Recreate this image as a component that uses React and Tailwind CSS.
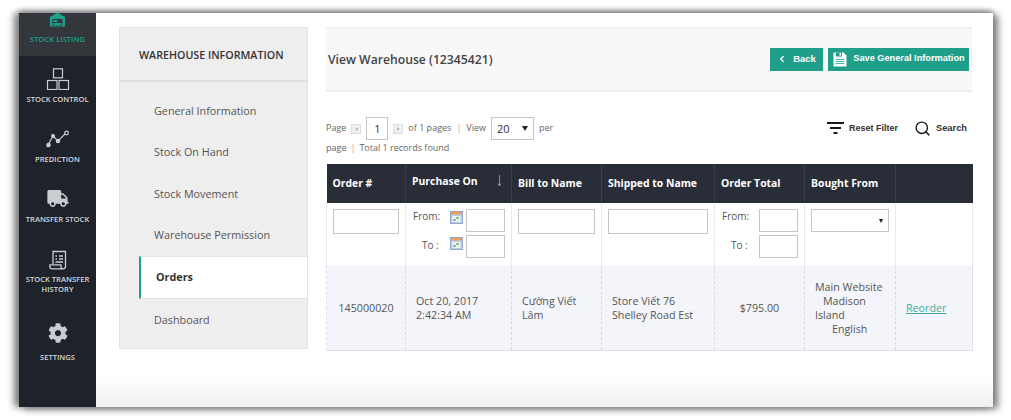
import { ChevronLeft, Search } from 'lucide-react';
import { FaCog, FaTruck } from 'react-icons/fa';

const tabs = ['General Information', 'Stock On Hand', 'Stock Movement', 'Warehouse Permission'];

function WarehouseIcon() {
  return (
    <svg width="17" height="15" viewBox="0 0 17 15" fill="#1f9f8a">
      <path d="M1 5 L8.5 0.5 L16 5 V14.5 H1 Z" />
      <rect x="3.5" y="7" width="10" height="6.5" fill="#33373c" />
      <rect x="4.5" y="8" width="4" height="2" fill="#1f9f8a" />
      <rect x="4.5" y="11" width="8" height="2" fill="#1f9f8a" />
    </svg>
  );
}

function BoxesIcon() {
  return (
    <svg width="24" height="22" viewBox="0 0 24 22" fill="none" stroke="#c9ccd0" strokeWidth="1.2">
      <rect x="7.5" y="0.8" width="9" height="9" />
      <rect x="1.5" y="12.5" width="9.5" height="9" />
      <rect x="13" y="12.5" width="9.5" height="9" />
    </svg>
  );
}

function PredictionIcon() {
  return (
    <svg width="24" height="18" viewBox="0 0 24 18" fill="#c9ccd0" stroke="#c9ccd0" strokeWidth="1.2">
      <path d="M2 15 L7 6 L12 11 L20 3" fill="none" />
      <circle cx="2.5" cy="15" r="1.7" />
      <circle cx="7" cy="6" r="1.4" />
      <circle cx="12" cy="11" r="1.7" />
      <circle cx="20.5" cy="3" r="1.8" fill="#1e232b" />
    </svg>
  );
}

function HistoryIcon() {
  return (
    <svg width="18" height="20" viewBox="0 0 18 20" fill="none" stroke="#c9ccd0" strokeWidth="1.3">
      <path d="M4 14 V1.5 H16.5 V16.5 C16.5 18 15.5 18.8 14 18.8 H3 C1.5 18.8 0.8 17.8 0.8 16.2 V14.8 H12 V16.5 C12 18 13 18.8 14 18.8" />
      <path d="M6.5 6 H8 M10 6 H14 M6.5 9 H8 M10 9 H14 M6.5 12 H14" />
    </svg>
  );
}

function FloppyIcon() {
  return (
    <svg width="14" height="15" viewBox="0 0 14 15" fill="#ffffff" className="shrink-0">
      <path d="M0.5 0.5 H10.5 L13.5 3.5 V14.5 H0.5 Z" />
      <rect x="3" y="0.5" width="6" height="4" fill="#1f9f8a" />
      <rect x="6.5" y="1.2" width="1.5" height="2.5" fill="#ffffff" />
      <path d="M2.5 7.5 H11.5 M2.5 9.5 H11.5 M2.5 11.5 H11.5" stroke="#1f9f8a" strokeWidth="0.8" />
    </svg>
  );
}

function FilterIcon() {
  return (
    <svg width="17" height="13" viewBox="0 0 17 13" fill="#1a1a1a">
      <rect x="0" y="0" width="17" height="2" />
      <rect x="3" y="5" width="11" height="2" />
      <rect x="6.5" y="10" width="4" height="2" />
    </svg>
  );
}

function CalendarIcon() {
  return (
    <svg width="13" height="13" viewBox="0 0 13 13" className="shrink-0">
      <rect x="0.5" y="0.5" width="12" height="12" fill="#b9cdea" stroke="#8fa9cf" />
      <rect x="1" y="1" width="11" height="2.5" fill="#f0a05a" />
      <rect x="2.5" y="5" width="8" height="6" fill="#eef3f5" />
      <rect x="6.5" y="6" width="2" height="2" fill="#62a84f" />
      <rect x="3.5" y="8" width="2" height="2" fill="#62a84f" />
    </svg>
  );
}

function SortArrow() {
  return (
    <svg width="5" height="12" viewBox="0 0 5 12" fill="none" stroke="#8a8d94" strokeWidth="1" className="mr-[3px] mt-[1px]">
      <path d="M2.5 0 V11 M0.8 8.5 L2.5 11 L4.2 8.5" />
    </svg>
  );
}

function PagerArrow({ dir }) {
  return (
    <span className="mx-[5px] inline-flex h-[10px] w-[10px] items-center justify-center border border-[#dddddd] bg-[#f0f0f0] align-middle">
      <span className={dir === 'left' ? 'h-0 w-0 border-y-[2px] border-r-[3px] border-y-transparent border-r-[#bbbbbb]' : 'h-0 w-0 border-y-[2px] border-l-[3px] border-y-transparent border-l-[#bbbbbb]'} />
    </span>
  );
}

function NavItem({ icon, label, className }) {
  return (
    <div className={`flex flex-col items-center text-center text-[7.6px] leading-[10px] text-[#d5d7da] ${className}`}>
      {icon}
      {label}
    </div>
  );
}

function Th({ children }) {
  return <th className="border-r border-[#3a3f4b] px-[6px] text-left text-[10.4px] font-bold text-white">{children}</th>;
}

function FilterRow({ label, calendar }) {
  return (
    <div className="flex h-[26px] items-start">
      <span className={`w-[37px] shrink-0 text-[10px] leading-[15px] text-[#555555] ${label === 'To :' ? 'pl-[9px] pt-[3px]' : ''}`}>{label}</span>
      {calendar && <span className="mr-[3px] mt-[2px] flex w-[13px] shrink-0"><CalendarIcon /></span>}
      <span className="h-[23px] w-[39px] shrink-0 border border-[#c6c6c6] bg-white" />
    </div>
  );
}

export default function App() {
  return (
    <div className="h-[420px] w-[1011px] overflow-hidden bg-white pl-[19px] pt-[13px]" style={{ fontFamily: '"Open Sans", sans-serif' }}>
      <div className="flex h-[394px] w-[974px] overflow-hidden bg-gradient-to-b from-white from-[93%] to-[#efefef] shadow-[-5px_0px_7px_#808080,5px_2px_7px_#808080,0px_-2px_5px_#999999]">
        <aside className="flex h-full w-[77px] shrink-0 flex-col bg-[#1e232b] font-semibold">
          <div className="flex h-[43px] flex-col items-center bg-[#33373c] text-[7.6px] leading-[10px] text-[#1f9f8a]">
            <span className="mt-[-1px] flex h-[15px] items-end overflow-hidden"><WarehouseIcon /></span>
            <span className="mt-[7px]">STOCK LISTING</span>
          </div>
          <NavItem className="h-[60px] pt-[12px]" icon={<span className="mb-[4px]"><BoxesIcon /></span>} label="STOCK CONTROL" />
          <NavItem className="h-[60px] pt-[14px]" icon={<span className="mb-[6px]"><PredictionIcon /></span>} label="PREDICTION" />
          <NavItem className="h-[60px] pt-[14px]" icon={<FaTruck className="mb-[7px] h-[17px] w-[22px] text-[#c9ccd0]" />} label="TRANSFER STOCK" />
          <NavItem className="h-[70px] pt-[14px]" icon={<span className="mb-[4px]"><HistoryIcon /></span>} label={<span>STOCK TRANSFER<br />HISTORY</span>} />
          <NavItem className="pt-[17px]" icon={<FaCog className="mb-[9px] h-[20px] w-[20px] text-[#c9ccd0]" />} label="SETTINGS" />
        </aside>

        <div className="ml-[23px] mt-[14px] flex h-[322px] w-[189px] shrink-0 flex-col border border-[#e2e2e8] bg-[#eeeeee]">
          <div className="flex h-[54px] shrink-0 items-center border-b-2 border-[#dfdfe3] pl-[19px] pt-[3px] text-[10.7px] font-semibold text-[#333333]">WAREHOUSE INFORMATION</div>
          <div className="ml-[19px] flex flex-1 flex-col">
            <div className="pt-[8px]">
              {tabs.map((tab) => (
                <div key={tab} className="flex h-[41.5px] items-center pl-[15px] text-[10.8px] text-[#555555]">{tab}</div>
              ))}
            </div>
            <div className="flex h-[43px] shrink-0 items-center border-y border-[#e2e2e8] border-l-2 border-l-[#1f9f8a] bg-white pl-[15px] text-[10.8px] font-bold text-[#333333]">Orders</div>
            <div className="flex h-[42px] items-center pl-[15px] text-[10.8px] text-[#555555]">Dashboard</div>
          </div>
        </div>

        <main className="ml-[18px] mt-[14px] w-[646px] shrink-0">
          <header className="flex h-[65px] items-center justify-between border-y-2 border-[#eeeeee] bg-[#f8f8f8] pl-[2px] pr-[3px]">
            <h1 className="pt-[1px] text-[12.2px] font-semibold text-[#444444]">View Warehouse (12345421)</h1>
            <div className="mb-[1px] flex gap-[5px]" style={{ fontFamily: '"Liberation Sans", sans-serif' }}>
              <button type="button" className="flex h-[23px] w-[53px] items-center justify-center gap-[6px] bg-[#1f9f8a] text-[9.5px] font-bold text-white">
                <ChevronLeft className="h-[10px] w-[10px]" strokeWidth={3} />
                Back
              </button>
              <button type="button" className="flex h-[23px] w-[141px] items-center justify-center gap-[6px] whitespace-nowrap bg-[#1f9f8a] pl-[1px] text-[9.2px] font-bold text-white">
                <FloppyIcon />
                Save General Information
              </button>
            </div>
          </header>

          <div className="flex h-[72px] items-start justify-between">
            <div className="mt-[25px] w-[240px] text-[9px] leading-[19px] text-[#666666]">
              Page<PagerArrow dir="left" />
              <span className="inline-flex h-[23px] w-[22px] items-center justify-center border border-[#c6c6c6] bg-white align-middle text-[11px] text-[#333333]">1</span>
              <PagerArrow dir="right" />of 1 pages<span className="mx-[5px] text-[#aaaaaa]">|</span>View
              <span className="mx-[5px] inline-flex h-[23px] w-[43px] items-center justify-between border border-[#c6c6c6] bg-white px-[5px] align-middle text-[11px] text-[#333333]">
                20<span className="h-0 w-0 border-x-[3px] border-t-[5px] border-x-transparent border-t-[#222222]" />
              </span>
              per
              <div className="mt-[-2px]">page<span className="mx-[4px] text-[#aaaaaa]">|</span>Total 1 records found</div>
            </div>
            <div className="mr-[5px] mt-[28px] flex items-center text-[9px] font-bold text-[#333333]" style={{ fontFamily: '"Liberation Sans", sans-serif' }}>
              <FilterIcon />
              <span className="ml-[5px]">Reset Filter</span>
              <Search className="ml-[16px] h-[17px] w-[17px] text-[#1a1a1a]" strokeWidth={2} />
              <span className="ml-[5px] text-[9.3px]">Search</span>
            </div>
          </div>

          <table className="w-[646px] table-fixed border-collapse">
            <colgroup>
              <col className="w-[79px]" />
              <col className="w-[106px]" />
              <col className="w-[90px]" />
              <col className="w-[113px]" />
              <col className="w-[90px]" />
              <col className="w-[91px]" />
              <col className="w-[77px]" />
            </colgroup>
            <thead>
              <tr className="h-[39px] bg-[#292d38]">
                <Th>Order #</Th>
                <Th>
                  <span className="flex items-start justify-between pb-[4px]">
                    Purchase On
                    <SortArrow />
                  </span>
                </Th>
                <Th>Bill to Name</Th>
                <Th>Shipped to Name</Th>
                <Th>Order Total</Th>
                <Th>Bought From</Th>
                <th />
              </tr>
            </thead>
            <tbody>
              <tr className="h-[63px] align-top">
                <td className="border-x border-[#e9e9ee] px-[6px] pt-[6px]"><div className="h-[25px] border border-[#c6c6c6]" /></td>
                <td className="border-r border-[#e9e9ee] pl-[7px] pt-[6px]"><FilterRow label="From:" calendar /><FilterRow label="To :" calendar /></td>
                <td className="border-r border-[#e9e9ee] px-[6px] pt-[6px]"><div className="h-[25px] border border-[#c6c6c6]" /></td>
                <td className="border-r border-[#e9e9ee] px-[6px] pt-[6px]"><div className="h-[25px] border border-[#c6c6c6]" /></td>
                <td className="border-r border-[#e9e9ee] pl-[7px] pt-[6px]"><FilterRow label="From:" /><FilterRow label="To :" /></td>
                <td className="border-r border-[#e9e9ee] px-[6px] pt-[6px]">
                  <div className="flex h-[23px] items-center justify-end border border-[#c6c6c6] pr-[5px]">
                    <span className="h-0 w-0 border-x-[2.5px] border-t-[4px] border-x-transparent border-t-[#222222]" />
                  </div>
                </td>
                <td className="border-r border-[#e9e9ee]" />
              </tr>
              <tr className="h-[84px] border-b border-[#dfdfe6] bg-[#f4f5fb] text-[10.7px] leading-[14px] text-[#555555]">
                <td className="border-l border-r border-dashed border-[#d8d8de] border-l-[#dfdfe6] text-center">145000020</td>
                <td className="border-r border-dashed border-[#d8d8de] pl-[10px]">Oct 20, 2017<br />2:42:34 AM</td>
                <td className="border-r border-dashed border-[#d8d8de] pl-[10px]">Cường Viết<br />Lâm</td>
                <td className="border-r border-dashed border-[#d8d8de] pl-[10px]">Store Viết 76<br />Shelley Road Est</td>
                <td className="border-r border-dashed border-[#d8d8de] text-center">$795.00</td>
                <td className="border-r border-dashed border-[#d8d8de] pl-[10px]">
                  Main Website<br /><span className="pl-[8px]">Madison</span><br />Island<br /><span className="pl-[17px]">English</span>
                </td>
                <td className="border-r border-[#dfdfe6] pl-[10px]"><a href="#" className="text-[#3fae9c] underline">Reorder</a></td>
              </tr>
            </tbody>
          </table>
        </main>
      </div>
    </div>
  );
}
